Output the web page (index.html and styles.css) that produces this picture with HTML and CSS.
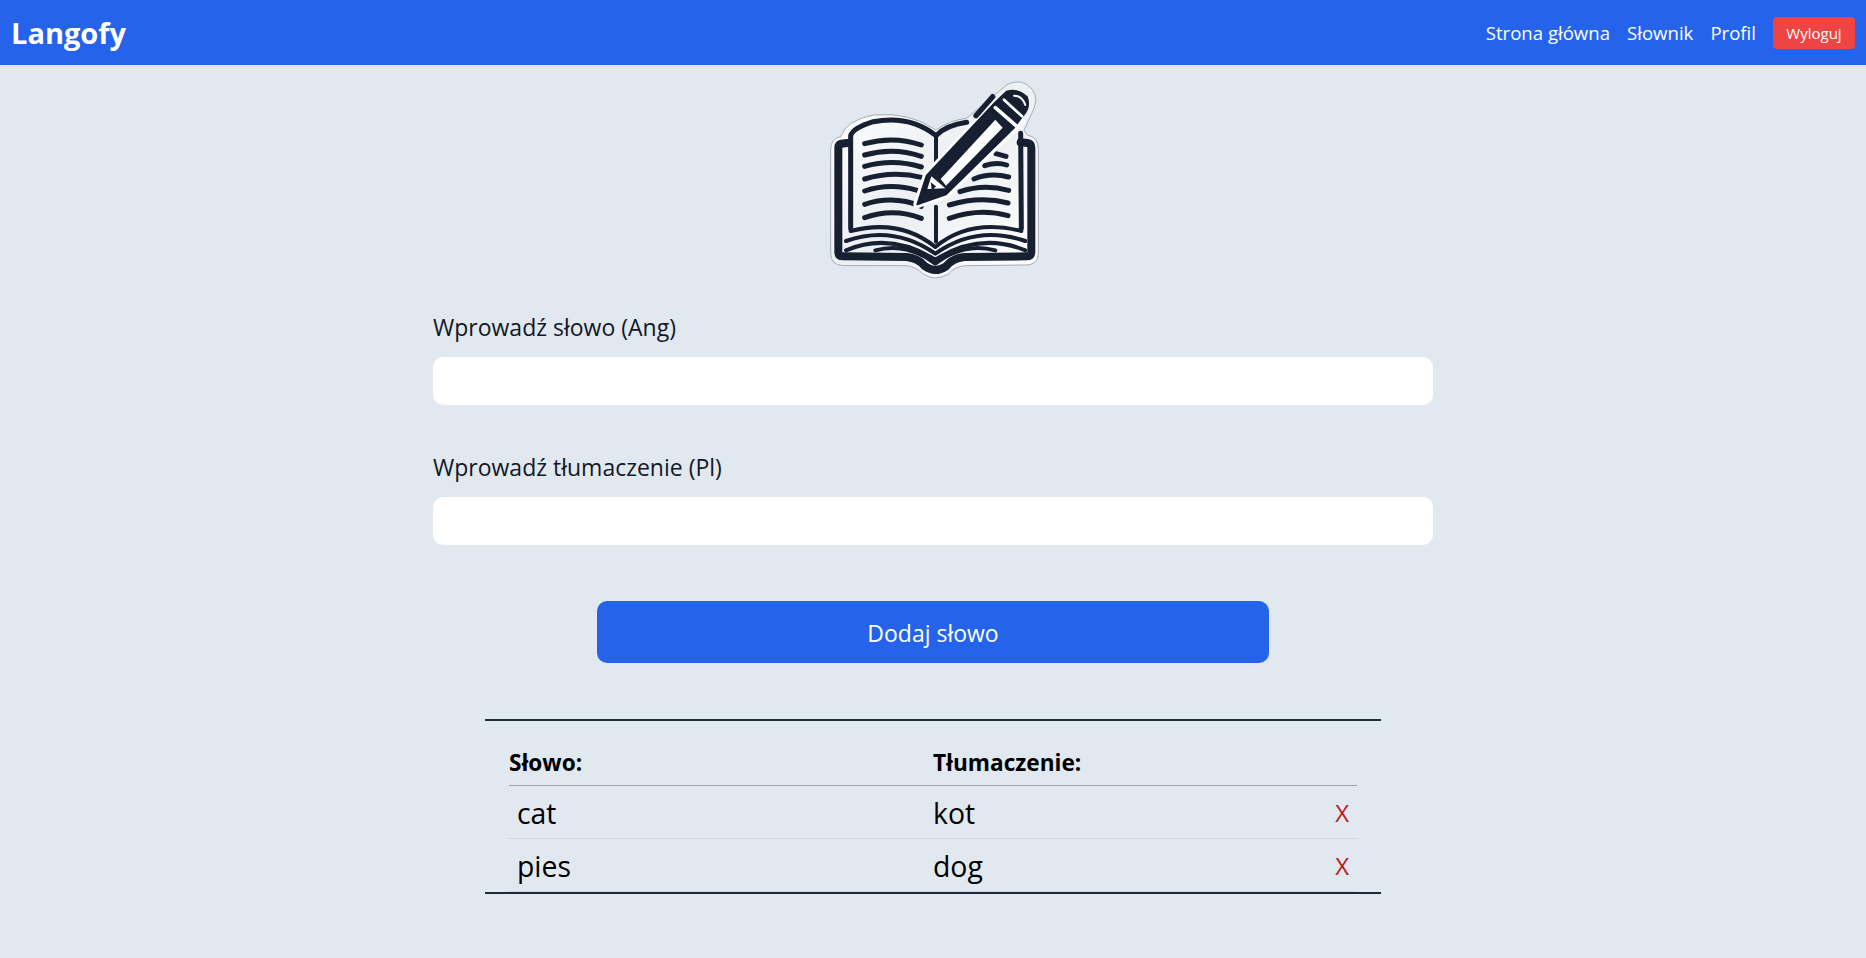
FILE: index.html
```html
<!DOCTYPE html>
<html lang="pl">
<head>
    <meta charset="UTF-8">
    <meta name="viewport" content="width=device-width, initial-scale=1.0">
    <title>Langofy</title>
    <link rel="stylesheet" href="styles.css">
</head>
<body>
    <nav class="navbar">
        <a class="brand" href="#">Langofy</a>
        <div class="nav-links">
            <a href="#">Strona główna</a>
            <a href="#">Słownik</a>
            <a href="#">Profil</a>
            <button class="logout">Wyloguj</button>
        </div>
    </nav>

    <div class="logo">
        <svg width="240" height="225" viewBox="9 0 720 675" fill="none" stroke-linecap="round" stroke-linejoin="round">
            <defs>
                <linearGradient id="sheet" x1="0" y1="0" x2="1" y2="1">
                    <stop offset="0" stop-color="#ffffff"/>
                    <stop offset="0.5" stop-color="#eceff3"/>
                    <stop offset="1" stop-color="#ffffff"/>
                </linearGradient>
            </defs>
            <!-- sticker edge -->
            <path d="M92 214Q62 222 62 252L62 565Q62 600 100 602L290 602Q320 606 338 626Q376 652 416 626Q432 606 465 602L650 600Q685 598 685 565L685 250Q685 216 652 210L642 196L672 130Q690 85 650 58Q620 42 590 60L470 160Q420 165 378 195Q300 140 190 150Q110 165 92 214Z" fill="url(#sheet)" stroke="#a4acb6" stroke-width="3"/>
            <g stroke="#162030">
                <!-- cover -->
                <path d="M112 234L94 236Q85 238 85 248L85 560Q85 574 98 574L290 576Q325 580 345 604Q376 626 408 604Q428 580 462 576L650 574Q664 574 664 560L664 248Q664 236 652 234L632 232" stroke-width="24"/>
                <!-- page edges -->
                <path d="M122 490L122 212Q130 188 190 170Q300 150 378 212Q410 180 470 172" stroke-width="15"/>
                <path d="M632 205L634 490" stroke-width="15"/>
                <path d="M378 212L378 300M378 425L378 530" stroke-width="12"/>
                <!-- left page text -->
                <g stroke-width="15">
                    <path d="M164 236Q250 212 334 240"/>
                    <path d="M164 270Q250 246 334 274"/>
                    <path d="M164 304Q250 280 334 306"/>
                    <path d="M164 342Q250 316 338 338"/>
                    <path d="M164 378Q240 352 322 376"/>
                    <path d="M164 418Q250 390 334 424"/>
                    <path d="M164 458Q250 428 334 460"/>
                </g>
                <!-- right page text -->
                <g stroke-width="15">
                    <path d="M418 460Q510 428 594 452"/>
                    <path d="M418 420Q510 392 594 414"/>
                    <path d="M450 380Q520 356 596 376"/>
                    <path d="M492 342Q540 322 596 336"/>
                    <path d="M524 302Q560 290 590 300"/>
                    <path d="M558 266L588 274"/>
                </g>
                <!-- bottom pages -->
                <g stroke-width="12">
                    <path d="M122 498Q270 460 376 546Q480 460 634 498"/>
                    <path d="M108 528Q250 478 376 566Q500 478 646 528"/>
                    <path d="M108 556Q240 500 376 584Q510 500 646 556"/>
                    <path d="M196 556Q290 530 376 596Q462 530 556 556"/>
                </g>
            </g>
            <!-- pencil -->
            <path d="M322 418L350 332L560 112L632 170L408 388Z" fill="#fff" stroke="#fff" stroke-width="24"/>
            <path d="M322 418L350 332L558 110L590 80Q620 70 650 95Q662 125 640 150L610 190L408 388Z" fill="#162030" stroke="#162030" stroke-width="6"/>
            <path d="M498 152L548 95" stroke="#162030" stroke-width="16"/>
            <path d="M392 342L556 164L578 188L408 362Z" fill="#fff"/>
            <path d="M352 372L364 334L406 370Z" fill="#fff"/>
            <path d="M362 352L378 364L366 378Z" fill="#162030"/>
            <path d="M556 128L618 182" stroke="#fff" stroke-width="11"/>
            <path d="M582 104L636 154" stroke="#fff" stroke-width="8"/>
            <path d="M612 92Q636 92 646 120" stroke="#fff" stroke-width="6"/>
        </svg>
    </div>

    <form class="word-form">
        <div class="field">
            <label for="slowo">Wprowadź słowo (Ang)</label>
            <input type="text" id="slowo">
        </div>
        <div class="field">
            <label for="tlumaczenie">Wprowadź tłumaczenie (Pl)</label>
            <input type="text" id="tlumaczenie">
        </div>
        <button class="add-word" type="button">Dodaj słowo</button>
    </form>

    <div class="words">
        <table>
            <thead>
                <tr>
                    <th class="col-word">Słowo:</th>
                    <th>Tłumaczenie:</th>
                    <th class="col-remove"></th>
                </tr>
            </thead>
            <tbody>
                <tr>
                    <td class="word">cat</td>
                    <td>kot</td>
                    <td class="remove"><a href="#">X</a></td>
                </tr>
                <tr>
                    <td class="word">pies</td>
                    <td>dog</td>
                    <td class="remove"><a href="#">X</a></td>
                </tr>
            </tbody>
        </table>
    </div>
</body>
</html>
```

FILE: styles.css
```css
* {
    box-sizing: border-box;
}
body {
    font-family: "Open Sans", "Noto Sans", Arial, sans-serif;
    margin: 0;
    padding: 0;
    background-color: #e2e8f0;
    color: #000000;
}
.navbar {
    display: flex;
    align-items: center;
    justify-content: space-between;
    height: 65px;
    padding: 0 11px 0 11px;
    background-color: #2563eb;
}
.brand {
    font-size: 29px;
    font-weight: 700;
    color: #ffffff;
    text-decoration: none;
}
.nav-links {
    display: flex;
    align-items: center;
    gap: 17px;
}
.nav-links a {
    font-size: 18.6px;
    color: #ffffff;
    text-decoration: none;
}
.logout {
    width: 82px;
    height: 32px;
    font-family: inherit;
    font-size: 15px;
    color: #ffffff;
    background-color: #ef4444;
    border: none;
    border-radius: 4px;
}
.logo {
    display: flex;
    justify-content: center;
}
.word-form {
    width: 1000px;
    margin: 23px auto 0;
}
.field {
    margin-bottom: 48px;
}
.field label {
    display: block;
    font-size: 23px;
    line-height: 28px;
    margin-bottom: 16px;
    color: #111827;
}
.field input {
    display: block;
    width: 100%;
    height: 48px;
    background-color: #ffffff;
    border: none;
    border-radius: 10px;
}
.add-word {
    display: block;
    width: 672px;
    height: 62px;
    margin: 56px auto 0;
    padding-top: 3px;
    font-family: inherit;
    font-size: 23px;
    color: #ffffff;
    background-color: #2563eb;
    border: none;
    border-radius: 10px;
}
.words {
    width: 896px;
    margin: 56px auto 0;
    padding: 24px 24px 0;
    border-top: 2px solid #1f2937;
    border-bottom: 2px solid #1f2937;
}
.words table {
    width: 100%;
    border-collapse: collapse;
    table-layout: fixed;
}
th {
    height: 40px;
    padding: 0 0 4px;
    font-size: 22.6px;
    font-weight: 700;
    text-align: left;
    border-bottom: 1px solid #9ca3af;
}
.col-word {
    width: 424px;
}
.col-remove {
    width: 60px;
}
td {
    height: 53px;
    padding: 2px 0 0;
    font-size: 28.4px;
    border-bottom: 1px solid #d1d5db;
}
.word {
    padding-left: 8px;
}
.remove {
    padding-right: 8px;
    text-align: right;
    font-size: 24px;
}
.remove a {
    color: #b91c1c;
    text-decoration: none;
}
```
